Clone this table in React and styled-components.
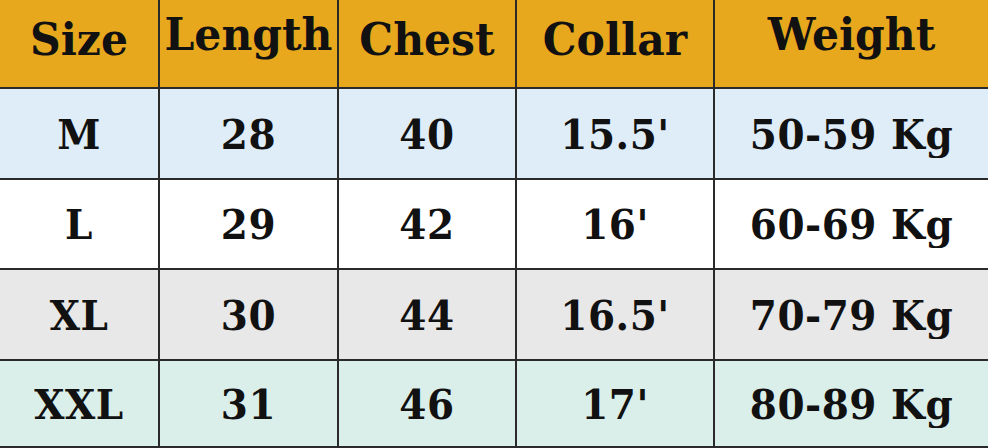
import React from "react";
import styled, {createGlobalStyle} from "styled-components";

const Global = createGlobalStyle`
  html, body {
    margin: 0;
    padding: 0;
    background: #ffffff;
  }
`;

const ROW_COLORS = ['#DFEDF9', '#FFFFFF', '#E8E8E8', '#DAEFEA'];

const Chart = styled.div({
  width: '988px',
  height: '448px',
  display: 'grid',
  gridTemplateColumns: '160px 179px 178px 198px 1fr',
  gridTemplateRows: '89px 91px 90px 91px 1fr',
  overflow: 'hidden',
  fontFamily: '"DejaVu Serif", "Liberation Serif", serif',
  fontWeight: 700,
  color: '#111',
});

const Cell = styled.div(p => ({
  boxSizing: 'border-box',
  display: 'flex',
  alignItems: 'center',
  justifyContent: 'center',
  background: p.head ? '#E8A81E' : p.bg,
  borderRight: p.last ? 'none' : '2px solid #2a2a2a',
  borderBottom: '2px solid #2a2a2a',
  fontSize: p.head ? '42.5px' : '39px',
  letterSpacing: p.head ? '0' : '0.5px',
  whiteSpace: 'nowrap',
  overflow: 'visible',
}));

const Label = styled.span(p => ({
  display: 'inline-block',
  transform: p.head
    ? `translateY(${p.raised ? -10 : -5}px) scaleY(1.06)`
    : 'scaleY(1.04)',
}));

const HEAD = [
  {text: 'Size'},
  {text: 'Length', raised: true},
  {text: 'Chest'},
  {text: 'Collar'},
  {text: 'Weight', raised: true},
];
const ROWS = [
  ['M', '28', '40', "15.5'", '50-59 Kg'],
  ['L', '29', '42', "16'", '60-69 Kg'],
  ['XL', '30', '44', "16.5'", '70-79 Kg'],
  ['XXL', '31', '46', "17'", '80-89 Kg'],
];

export default function App() {
  return (
    <>
      <Global />
      <Chart>
        {HEAD.map((h, i) => (
          <Cell key={h.text} head last={i === HEAD.length - 1}>
            <Label head raised={h.raised}>{h.text}</Label>
          </Cell>
        ))}
        {ROWS.map((row, r) => row.map((v, i) => (
          <Cell key={r + '-' + i} bg={ROW_COLORS[r]} last={i === row.length - 1}>
            <Label>{v}</Label>
          </Cell>
        )))}
      </Chart>
    </>
  );
}
